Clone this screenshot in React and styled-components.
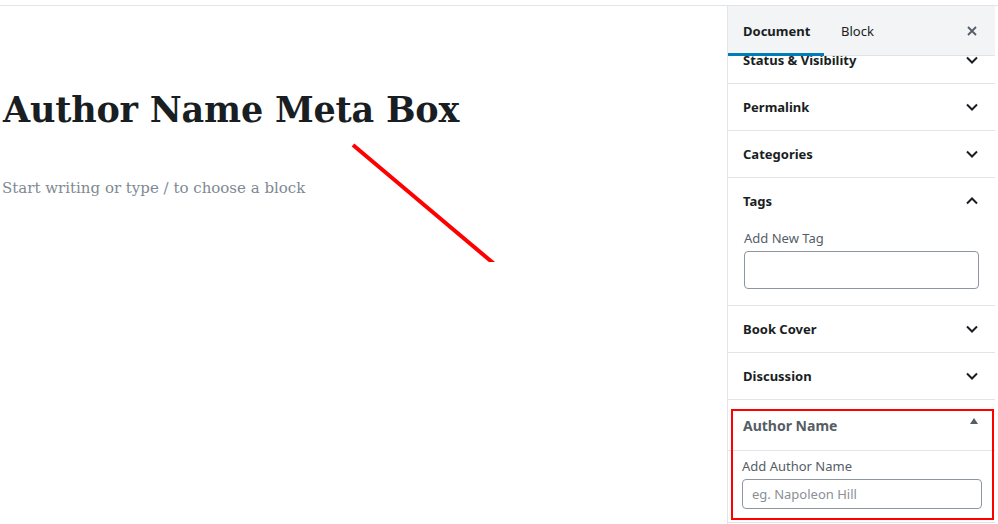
import React from 'react';
import styled, { createGlobalStyle } from 'styled-components';

const GlobalStyle = createGlobalStyle`
  html, body { margin: 0; padding: 0; background: #fff; }
  body { font-family: "Noto Sans", "Open Sans", sans-serif; color: #191e23; }
  * { box-sizing: border-box; }
`;

const Page = styled.div`
  margin-top: 5px;
  border-top: 1px solid #e2e4e7;
  height: 519px;
  display: flex;
  overflow: hidden;
`;

const Editor = styled.main`
  flex: 1;
  position: relative;
  padding: 78px 0 0 3px;
`;

const Title = styled.h1`
  margin: 0;
  font-family: "DejaVu Serif", serif;
  font-weight: 700;
  font-size: 35px;
  line-height: 52px;
  color: #191e23;
  letter-spacing: -0.2px;
`;

const Placeholder = styled.p`
  margin: 39px 0 0 -1px;
  font-family: "DejaVu Serif", serif;
  font-size: 15px;
  line-height: 26px;
  color: #7e8993;
`;

const Arrow = styled.svg`
  position: absolute;
  left: 340px;
  top: 120px;
  pointer-events: none;
`;

const Sidebar = styled.aside`
  width: 268px;
  border-left: 1px solid #e2e4e7;
  display: flex;
  flex-direction: column;
  background: #fff;
`;

const RightGutter = styled.div`
  width: 3px;
`;

const TabBar = styled.div`
  height: 50px;
  flex-shrink: 0;
  background: #f3f4f5;
  border-bottom: 1px solid #e2e4e7;
  display: flex;
  align-items: stretch;
  position: relative;
  z-index: 1;
`;

const Tab = styled.button`
  border: 0;
  background: transparent;
  font-family: inherit;
  font-size: 13px;
  font-weight: ${p => (p.$active ? 700 : 400)};
  color: #191e23;
  padding: 0 ${p => (p.$active ? '15px' : '17px')};
  width: ${p => p.$width}px;
  text-align: left;
  position: relative;
  cursor: pointer;
  &::after {
    content: '';
    position: absolute;
    left: 0;
    right: 0;
    bottom: -1px;
    height: 3px;
    background: ${p => (p.$active ? '#007cba' : 'transparent')};
  }
`;

const Close = styled.button`
  margin-left: auto;
  width: 46px;
  border: 0;
  background: transparent;
  display: flex;
  align-items: center;
  justify-content: center;
  color: #555d66;
`;

const Scroll = styled.div`
  flex: 1;
  overflow: hidden;
`;

const Panels = styled.div`
  margin-top: -19px;
`;

const Panel = styled.section`
  border-bottom: 1px solid #e2e4e7;
  position: relative;
`;

const PanelHead = styled.div`
  height: 46px;
  padding: 0 16px 0 15px;
  display: flex;
  align-items: center;
  justify-content: space-between;
  font-size: 13px;
  font-weight: 700;
  color: #191e23;
`;

const PanelBody = styled.div`
  padding: 0 16px 16px 16px;
`;

const Label = styled.label`
  display: block;
  font-size: 13px;
  color: #555d66;
  line-height: 20px;
  margin: 4px 0 3px 0;
`;

const TagInput = styled.div`
  height: 38px;
  border: 1px solid #8d96a0;
  border-radius: 4px;
  width: 235px;
`;

const MetaHead = styled.div`
  height: 51px;
  padding: 0 16px 0 15px;
  display: flex;
  align-items: center;
  justify-content: space-between;
  font-size: 14px;
  font-weight: 700;
  color: #555d66;
  border-bottom: 1px solid #e2e4e7;
`;

const MetaBody = styled.div`
  padding: 5px 14px 13px 14px;
`;

const MetaLabel = styled.label`
  display: block;
  font-size: 13px;
  color: #555d66;
  line-height: 20px;
  margin-bottom: 3px;
`;

const TextInput = styled.input`
  width: 240px;
  height: 30px;
  border: 1px solid #8d96a0;
  border-radius: 4px;
  padding: 0 9px;
  font-family: inherit;
  font-size: 13px;
  color: #191e23;
  &::placeholder { color: #8a9096; }
`;

const Highlight = styled.div`
  position: absolute;
  left: 3px;
  top: 9px;
  width: 263px;
  height: 111px;
  border: 2px solid #f00;
  pointer-events: none;
`;

const Triangle = styled.span`
  width: 0;
  height: 0;
  border-left: 4.5px solid transparent;
  border-right: 4.5px solid transparent;
  border-bottom: 6px solid #555d66;
  margin: -8px 1px 0 0;
`;

function Chevron({ up }) {
  return (
    <svg width="14" height="14" viewBox="0 0 14 14">
      <polyline
        points={up ? '2,9.5 7,4.5 12,9.5' : '2,4.5 7,9.5 12,4.5'}
        fill="none"
        stroke="#191e23"
        strokeWidth="2"
      />
    </svg>
  );
}

function CloseIcon() {
  return (
    <svg width="12" height="12" viewBox="0 0 12 12">
      <path d="M2 2L10 10M10 2L2 10" stroke="#555d66" strokeWidth="1.8" />
    </svg>
  );
}

const collapsed = ['Permalink', 'Categories'];

export default function App() {
  return (
    <>
      <GlobalStyle />
      <Page>
        <Editor>
          <Title>Author Name Meta Box</Title>
          <Placeholder>Start writing or type / to choose a block</Placeholder>
          <Arrow width="160" height="136" viewBox="0 0 160 136">
            <line x1="13" y1="19" x2="165" y2="147" stroke="#f00" strokeWidth="4" />
          </Arrow>
        </Editor>
        <Sidebar>
          <TabBar>
            <Tab $active $width={96}>Document</Tab>
            <Tab $width={66}>Block</Tab>
            <Close aria-label="Close settings"><CloseIcon /></Close>
          </TabBar>
          <Scroll>
            <Panels>
              <Panel>
                <PanelHead>Status &amp; Visibility<Chevron /></PanelHead>
              </Panel>
              {collapsed.map(t => (
                <Panel key={t}>
                  <PanelHead>{t}<Chevron /></PanelHead>
                </Panel>
              ))}
              <Panel>
                <PanelHead>Tags<Chevron up /></PanelHead>
                <PanelBody>
                  <Label>Add New Tag</Label>
                  <TagInput />
                </PanelBody>
              </Panel>
              <Panel>
                <PanelHead>Book Cover<Chevron /></PanelHead>
              </Panel>
              <Panel>
                <PanelHead>Discussion<Chevron /></PanelHead>
              </Panel>
              <Panel>
                <MetaHead>Author Name<Triangle /></MetaHead>
                <MetaBody>
                  <MetaLabel>Add Author Name</MetaLabel>
                  <TextInput placeholder="eg. Napoleon Hill" />
                </MetaBody>
                <Highlight />
              </Panel>
            </Panels>
          </Scroll>
        </Sidebar>
        <RightGutter />
      </Page>
    </>
  );
}
